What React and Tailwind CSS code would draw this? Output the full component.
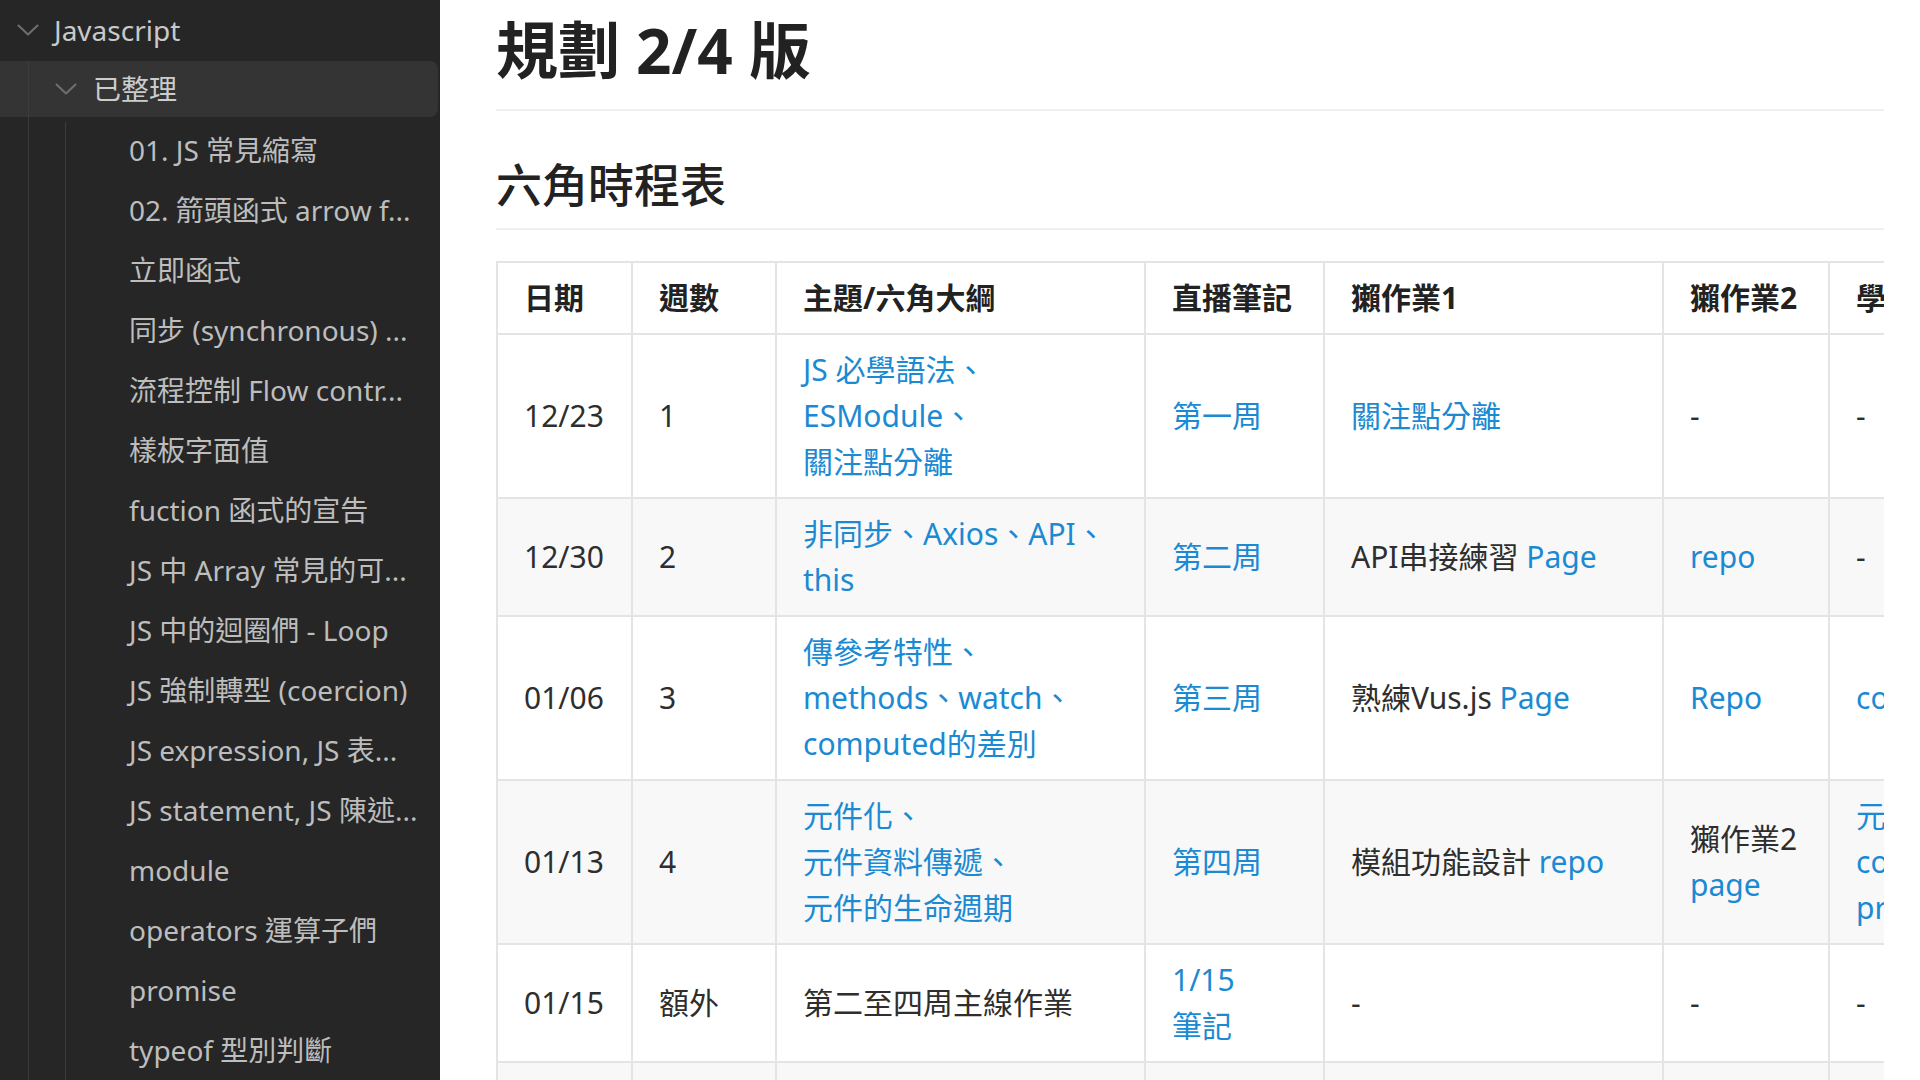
import React from "react";

const FONT = { fontFamily: '"Noto Sans", "Noto Sans CJK TC", sans-serif' };

function Chevron() {
  return (
    <svg width="22" height="12" viewBox="0 0 22 12" fill="none" className="shrink-0">
      <polyline points="1.5,1.5 11,10.5 20.5,1.5" stroke="#6f6f6f" strokeWidth="2" strokeLinecap="round" strokeLinejoin="round" />
    </svg>
  );
}

const items = [
  "01. JS 常見縮寫",
  "02. 箭頭函式 arrow f...",
  "立即函式",
  "同步 (synchronous) ...",
  "流程控制 Flow contr...",
  "樣板字面值",
  "fuction 函式的宣告",
  "JS 中 Array 常見的可...",
  "JS 中的迴圈們 - Loop",
  "JS 強制轉型 (coercion)",
  "JS expression, JS 表...",
  "JS statement, JS 陳述...",
  "module",
  "operators 運算子們",
  "promise",
  "typeof 型別判斷",
];

function Sidebar() {
  return (
    <aside className="w-[440px] shrink-0 h-full bg-[#262626] overflow-hidden text-[28px] text-[#bdbdbd]" style={FONT}>
      <div className="h-[60px] flex items-center pl-[17px]">
        <Chevron />
        <span className="ml-[15px] text-[#c9c9c9] whitespace-nowrap">Javascript</span>
      </div>
      <div className="relative">
        <div className="h-[60px] pt-[1px]">
          <div className="h-[56px] w-[438px] rounded-r-[8px] bg-[#343434] flex items-center pl-[55px]">
            <Chevron />
            <span className="ml-[16px] text-[#cccccc] whitespace-nowrap">已整理</span>
          </div>
        </div>
        <div className="relative">
          {items.map((t) => (
            <div key={t} className="h-[60px] flex items-center pl-[129px] pr-[20px] whitespace-nowrap overflow-hidden">
              {t}
            </div>
          ))}
          <div className="absolute left-[65px] top-[2px] bottom-0 w-px bg-[#3c3c3c]" />
        </div>
        <div className="absolute left-[28px] top-[1px] bottom-0 w-px bg-[#3c3c3c]" />
      </div>
    </aside>
  );
}

const L = ({ children }) => <span className="text-[#1b8ad3]">{children}</span>;

const td = "border-2 border-[#e4e4e4] px-[26px] py-[12px] align-middle whitespace-nowrap overflow-hidden";
const th = "border-2 border-[#e4e4e4] px-[26px] py-[12px] align-middle text-left font-bold text-[#222222] whitespace-nowrap overflow-hidden";

function Table() {
  return (
    <table className="table-fixed border-collapse w-[1582px] text-[30px] leading-[46px] text-[#2e2e2e]">
      <colgroup>
        <col className="w-[135px]" />
        <col className="w-[144px]" />
        <col className="w-[369px]" />
        <col className="w-[179px]" />
        <col className="w-[339px]" />
        <col className="w-[166px]" />
        <col className="w-[250px]" />
      </colgroup>
      <thead>
        <tr className="bg-white">
          <th className={th}>日期</th>
          <th className={th}>週數</th>
          <th className={th}>主題/六角大綱</th>
          <th className={th}>直播筆記</th>
          <th className={th}>獺作業1</th>
          <th className={th}>獺作業2</th>
          <th className={th}>學習資源</th>
        </tr>
      </thead>
      <tbody>
        <tr className="bg-white">
          <td className={td}>12/23</td>
          <td className={td}>1</td>
          <td className={td}>
            <L>JS 必學語法、</L>
            <br />
            <L>ESModule、</L>
            <br />
            <L>關注點分離</L>
          </td>
          <td className={td}><L>第一周</L></td>
          <td className={td}><L>關注點分離</L></td>
          <td className={td}>-</td>
          <td className={td}>-</td>
        </tr>
        <tr className="bg-[#f8f8f8]">
          <td className={td}>12/30</td>
          <td className={td}>2</td>
          <td className={td}>
            <L>非同步、Axios、API、</L>
            <br />
            <L>this</L>
          </td>
          <td className={td}><L>第二周</L></td>
          <td className={td}>API串接練習 <L>Page</L></td>
          <td className={td}><L>repo</L></td>
          <td className={td}>-</td>
        </tr>
        <tr className="bg-white">
          <td className={td}>01/06</td>
          <td className={td}>3</td>
          <td className={td}>
            <L>傳參考特性、</L>
            <br />
            <L>methods、watch、</L>
            <br />
            <L>computed的差別</L>
          </td>
          <td className={td}><L>第三周</L></td>
          <td className={td}>熟練Vus.js <L>Page</L></td>
          <td className={td}><L>Repo</L></td>
          <td className={td}><L>computed</L></td>
        </tr>
        <tr className="bg-[#f8f8f8]">
          <td className={td}>01/13</td>
          <td className={td}>4</td>
          <td className={td}>
            <L>元件化、</L>
            <br />
            <L>元件資料傳遞、</L>
            <br />
            <L>元件的生命週期</L>
          </td>
          <td className={td}><L>第四周</L></td>
          <td className={td}>模組功能設計 <L>repo</L></td>
          <td className={td}>
            獺作業2
            <br />
            <L>page</L>
          </td>
          <td className={td}>
            <L>元件</L>
            <br />
            <L>component</L>
            <br />
            <L>props</L>
          </td>
        </tr>
        <tr className="bg-white">
          <td className={td}>01/15</td>
          <td className={td}>額外</td>
          <td className={td}>第二至四周主線作業</td>
          <td className={td}>
            <L>1/15</L>
            <br />
            <L>筆記</L>
          </td>
          <td className={td}>-</td>
          <td className={td}>-</td>
          <td className={td}>-</td>
        </tr>
        <tr className="bg-[#f8f8f8]">
          <td className={td}>&nbsp;</td>
          <td className={td}>&nbsp;</td>
          <td className={td}>&nbsp;</td>
          <td className={td}>&nbsp;</td>
          <td className={td}>&nbsp;</td>
          <td className={td}>&nbsp;</td>
          <td className={td}>&nbsp;</td>
        </tr>
      </tbody>
    </table>
  );
}

export default function App() {
  return (
    <div className="flex w-[1920px] h-[1080px] overflow-hidden bg-white">
      <Sidebar />
      <main className="flex-1 h-full overflow-hidden bg-white pl-[56px] pr-[36px] pt-[13px]" style={FONT}>
        <div className="w-full overflow-hidden">
          <h1 className="text-[62px] leading-[74px] font-bold text-[#222222] pb-[22px] border-b-2 border-[#efefef] whitespace-nowrap">
            規劃 2/4 版
          </h1>
          <h2 className="mt-[45px] text-[46px] leading-[56px] font-medium text-[#222222] pb-[16px] border-b-2 border-[#efefef] whitespace-nowrap">
            六角時程表
          </h2>
          <div className="mt-[31px] w-full overflow-hidden">
            <Table />
          </div>
        </div>
      </main>
    </div>
  );
}
